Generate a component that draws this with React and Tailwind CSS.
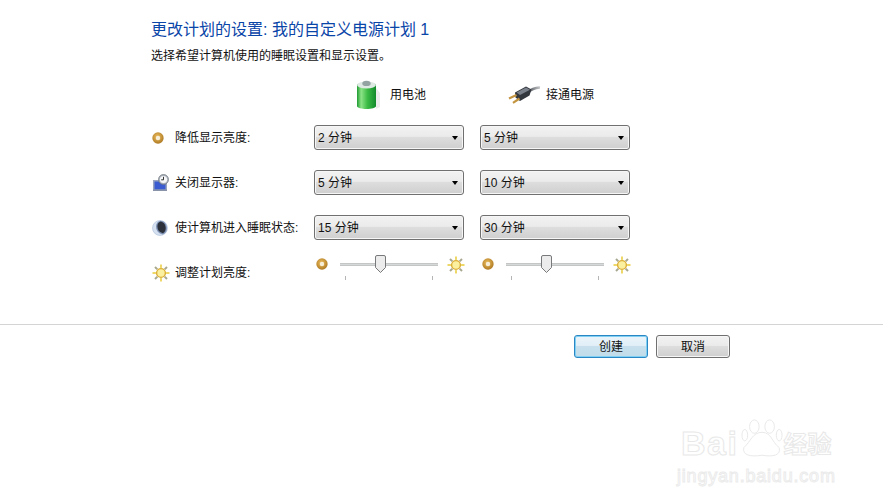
const fontStack = "font-['Liberation_Sans','Noto_Sans_CJK_SC',sans-serif]";

// ── Small power icons ─────────────────────────────────────────
function DimIcon({ className = "w-3 h-3" }) {
  return (
    <svg viewBox="0 0 14 14" className={className}>
      <defs>
        <radialGradient id="dim" cx="45%" cy="40%" r="65%">
          <stop offset="0%" stopColor="#f0c060" />
          <stop offset="100%" stopColor="#a8741e" />
        </radialGradient>
      </defs>
      <circle cx="7" cy="7" r="6.6" fill="url(#dim)" />
      <circle cx="7" cy="7" r="2.6" fill="#f6eed8" />
    </svg>
  );
}

function SunIcon({ className = "w-[18px] h-[18px]" }) {
  const rays = [0, 45, 90, 135, 180, 225, 270, 315];
  return (
    <svg viewBox="0 0 18 18" className={className}>
      {rays.map((r) => (
        <rect key={r} x="8" y="0.5" width="2" height="3.4" fill={r % 90 ? "#a8a890" : "#ecd768"} transform={`rotate(${r} 9 9)`} />
      ))}
      <circle cx="9" cy="9" r="4.4" fill="#fbf0a0" stroke="#dcae38" strokeWidth="1.4" />
    </svg>
  );
}

function MonitorIcon() {
  return (
    <svg viewBox="0 0 18 18" className="w-[18px] h-[18px]">
      <rect x="1" y="6" width="14" height="11" fill="#9aa6c0" />
      <rect x="2.5" y="7.5" width="11" height="8" fill="#3a5cd0" />
      <rect x="1" y="15.5" width="14" height="1.5" fill="#8892a8" />
      <circle cx="11.5" cy="5.5" r="5" fill="#aab0ba" stroke="#70787f" strokeWidth="0.7" />
      <circle cx="11.5" cy="5.5" r="3.6" fill="#f6f7f9" />
      <path d="M11.5 2.8 V5.8 H9.2" fill="none" stroke="#333" strokeWidth="1" />
    </svg>
  );
}

function SleepIcon() {
  return (
    <svg viewBox="0 0 16 16" className="w-4 h-4">
      <circle cx="8" cy="8" r="7.5" fill="#d5e0f0" stroke="#a9bcd8" strokeWidth="0.6" />
      <path d="M8.5 0.8 A7.2 7.2 0 0 1 10.5 14.6 A8 8 0 0 1 4 6.5 A6 6 0 0 1 8.5 0.8 Z" fill="#7f93b6" />
      <path d="M8.8 1.5 A6.6 6.6 0 0 1 11 13.2 A7 7 0 0 1 5.4 6.5 A5 5 0 0 1 8.8 1.5 Z" fill="#2c303a" />
    </svg>
  );
}

function BatteryIcon() {
  return (
    <svg viewBox="0 0 24 30" className="w-6 h-[30px]">
      <defs>
        <linearGradient id="cell" x1="0" x2="1" y1="0" y2="0">
          <stop offset="0%" stopColor="#1f9a32" />
          <stop offset="22%" stopColor="#8ce486" />
          <stop offset="55%" stopColor="#3cbb46" />
          <stop offset="100%" stopColor="#128a2a" />
        </linearGradient>
      </defs>
      <path d="M20 8 L24 13 V27 L20 29 Z" fill="#d4d4d4" opacity="0.45" />
      <path d="M1 5 C1 2 20 2 20 5 V26 C20 30 1 30 1 26 Z" fill="url(#cell)" />
      <ellipse cx="10.5" cy="5" rx="9.5" ry="3.4" fill="#dfe9e4" />
      <ellipse cx="10.5" cy="3.4" rx="4.2" ry="2.6" fill="#93a3a1" />
    </svg>
  );
}

function PlugIcon() {
  return (
    <svg viewBox="0 0 32 18" className="w-8 h-[18px]">
      <defs>
        <linearGradient id="cord" x1="0" x2="1" y1="0" y2="0">
          <stop offset="0%" stopColor="#50555c" />
          <stop offset="100%" stopColor="#c4c6c8" />
        </linearGradient>
      </defs>
      <path d="M20 6 C24 2.5 27 2 32 1.5" fill="none" stroke="url(#cord)" strokeWidth="2.6" />
      <path d="M7 6.5 L18 0.5 L23.5 3.5 L21.5 9.5 L12 15 L7.5 11.5 Z" fill="#33373e" />
      <path d="M8.5 6.5 L18 1.5 L22 3.8 L12 9 Z" fill="#7b818b" />
      <path d="M8.5 9 L1 12.5" stroke="#c49540" strokeWidth="2.2" />
      <path d="M11.5 12.5 L5 16.8" stroke="#c49540" strokeWidth="2.2" />
    </svg>
  );
}

// ── Win7 style controls ───────────────────────────────────────
function Dropdown({ value }) {
  return (
    <div className="flex items-center justify-between h-[25px] w-[150px] pl-[3px] pr-[5px] rounded-[3px] border border-[#707070] text-xs text-[#111] bg-[linear-gradient(#f2f2f2_0%,#ebebeb_45%,#dddddd_50%,#cfcfcf_100%)] shadow-[inset_0_0_0_1px_#f6f6f6]">
      <span>{value}</span>
      <span className="w-0 h-0 border-x-[3.5px] border-x-transparent border-t-4 border-t-black" />
    </div>
  );
}

function Slider() {
  return (
    <div className="flex items-start w-[150px] h-[30px] pl-[2px]">
      <div className="mt-[3px]">
        <DimIcon />
      </div>
      <div className="relative ml-3 shrink-0 w-[98px] h-[30px]">
        <div className="absolute left-0 right-0 top-[8px] h-[3px] bg-[#d6d9d9] border-y border-y-[#c4c6c6]" />
        <div className="absolute left-[5px] top-[21px] w-px h-1 bg-[#b5b5b5]" />
        <div className="absolute right-[5px] top-[21px] w-px h-1 bg-[#b5b5b5]" />
        <svg viewBox="0 0 11 18" className="absolute left-[35px] top-0 w-[11px] h-[18px]">
          <path d="M0.5 2 Q0.5 0.5 2 0.5 H9 Q10.5 0.5 10.5 2 V12.5 L5.5 17.5 L0.5 12.5 Z" fill="#ececec" stroke="#77797b" />
        </svg>
      </div>
      <div className="ml-[9px] mt-px shrink-0">
        <SunIcon />
      </div>
    </div>
  );
}

function Button({ children, primary }) {
  return (
    <button
      className={
        primary
          ? "w-[74px] h-[23px] rounded-[3px] border border-[#2b87c4] text-xs text-[#111] bg-[linear-gradient(#eaf4fa_0%,#e2eff7_45%,#c8e0ee_50%,#c2dcea_100%)] shadow-[inset_0_0_0_1px_#7fd0f2]"
          : "w-[74px] h-[23px] rounded-[3px] border border-[#707070] text-xs text-[#111] bg-[linear-gradient(#f2f2f2_0%,#ebebeb_45%,#dddddd_50%,#cfcfcf_100%)] shadow-[inset_0_0_0_1px_#f6f6f6]"
      }
    >
      {children}
    </button>
  );
}

// ── Settings rows ─────────────────────────────────────────────
const rows = [
  { icon: <DimIcon />, label: "降低显示亮度:", battery: "2 分钟", plugged: "5 分钟" },
  { icon: <MonitorIcon />, label: "关闭显示器:", battery: "5 分钟", plugged: "10 分钟" },
  { icon: <SleepIcon />, label: "使计算机进入睡眠状态:", battery: "15 分钟", plugged: "30 分钟" },
];

function Label({ icon, text }) {
  return (
    <div className="flex items-center text-xs text-[#111]">
      <span className="w-6 flex justify-start pl-px">{icon}</span>
      {text}
    </div>
  );
}

export default function App() {
  return (
    <div className={`relative w-[883px] h-[504px] overflow-hidden bg-white ${fontStack}`}>
      <div className="pl-[151px] pt-[19px]">
        <h1 className="text-[16px] leading-[22px] text-[#0a45a8]">更改计划的设置: 我的自定义电源计划 1</h1>
        <p className="mt-[5px] text-xs leading-[20px] text-[#111]">选择希望计算机使用的睡眠设置和显示设置。</p>

        {/* Column heads */}
        <div className="mt-[13px] h-[32px] flex text-xs text-[#111]">
          <div className="w-[152px] ml-[205px] flex items-center">
            <BatteryIcon />
            <span className="ml-[10px]">用电池</span>
          </div>
          <div className="flex items-center">
            <PlugIcon />
            <span className="ml-[6px]">接通电源</span>
          </div>
        </div>

        {/* Selects */}
        <div className="mt-[14px] flex flex-col gap-[20px]">
          {rows.map((r) => (
            <div key={r.label} className="grid grid-cols-[163px_150px_150px] gap-x-0">
              <Label icon={r.icon} text={r.label} />
              <Dropdown value={r.battery} />
              <div className="ml-4">
                <Dropdown value={r.plugged} />
              </div>
            </div>
          ))}
          <div className="-mt-[5px] grid grid-cols-[163px_150px_150px]">
            <div className="pt-[9px]">
              <Label icon={<SunIcon />} text="调整计划亮度:" />
            </div>
            <Slider />
            <div className="ml-4">
              <Slider />
            </div>
          </div>
        </div>
      </div>

      {/* Footer */}
      <div className="mt-[39px] h-px bg-[#d4d4d4]" />
      <div className="mt-[10px] flex justify-end gap-2 pr-[153px]">
        <Button primary>创建</Button>
        <Button>取消</Button>
      </div>

      {/* Baidu watermark */}
      <div className="absolute left-[677px] top-[418px] w-[170px] text-white">
        <div className="flex items-end h-[42px] pl-[4px]">
          <span className="font-['Liberation_Sans',sans-serif] text-[34px] leading-[34px] font-bold tracking-[1.5px] [-webkit-text-stroke:1px_#e8e8e8]">Bai</span>
          <svg viewBox="0 0 44 42" className="w-[42px] h-[42px] ml-[3px]">
            <g fill="#fff" stroke="#e8e8e8" strokeWidth="1">
              <ellipse cx="14" cy="8" rx="5" ry="7" />
              <ellipse cx="30" cy="8" rx="5" ry="7" />
              <ellipse cx="40" cy="17" rx="3" ry="6" />
              <ellipse cx="4" cy="17" rx="3" ry="6" />
              <path d="M22 14 C32 14 32 24 40 30 C42 38 34 40 22 38 C10 40 1 38 3 30 C10 24 12 14 22 14 Z" />
            </g>
          </svg>
          <span className="text-[24px] leading-[30px] font-bold [-webkit-text-stroke:1px_#e8e8e8]">经验</span>
        </div>
        <div className="mt-[6px] font-['Liberation_Sans',sans-serif] text-[18px] leading-[20px] tracking-[0.8px] [-webkit-text-stroke:1px_#ebebeb]">jingyan.baidu.com</div>
      </div>
    </div>
  );
}
